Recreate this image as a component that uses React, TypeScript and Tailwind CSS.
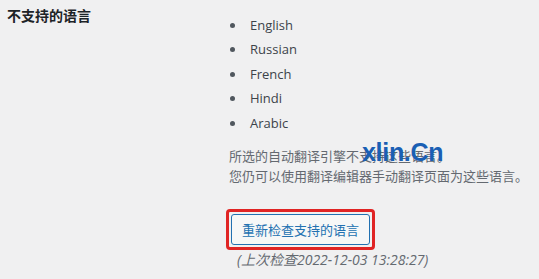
import React from 'react';

const languages = ['English', 'Russian', 'French', 'Hindi', 'Arabic'];

export default function App() {
  return (
    <div
      className="relative w-[539px] h-[279px] bg-[#f0f0f1] text-[13px] text-[#3c434a] overflow-hidden"
      style={{ fontFamily: '"Open Sans", "Noto Sans CJK SC", sans-serif' }}
    >
      <div className="flex">
        <div className="w-[226px] shrink-0 pl-[7px] pt-[6px] font-bold text-[#1d2327] text-[14px] leading-[20px]">
          不支持的语言
        </div>
        <div className="pt-[13px] min-w-0 flex-1">
          <ul className="pl-[20px] list-disc marker:text-[#50575e]">
            {languages.map(l => (
              <li key={l} className="leading-[24.4px] pl-[4px]">
                {l}
              </li>
            ))}
          </ul>
          <div className="mt-[11px] ml-[3px] text-[#646970] leading-[20px] whitespace-nowrap">
            <p>所选的自动翻译引擎不支持这些语言。</p>
            <p>您仍可以使用翻译编辑器手动翻译页面为这些语言。</p>
          </div>
          <div className="mt-[23px] flex w-fit border-[3px] border-[#e02424] rounded-[4px] p-[2px]">
            <button className="flex items-center justify-center w-[139px] h-[31px] bg-[#f6f7f7] border border-[#2271b1] rounded-[3px] text-[#2271b1] text-[13px] leading-[20px]">
              重新检查支持的语言
            </button>
          </div>
          <div className="ml-[11px] italic text-[#646970] text-[14px] leading-[20px] whitespace-nowrap">
            (上次检查2022-12-03 13:28:27)
          </div>
        </div>
      </div>
      <div
        className="absolute left-[362px] top-[134px] text-[25px] font-bold text-[#1a5fb4] tracking-[-0.3px]"
        style={{ fontFamily: '"Liberation Sans", sans-serif' }}
      >
        xlin.Cn
      </div>
    </div>
  );
}
